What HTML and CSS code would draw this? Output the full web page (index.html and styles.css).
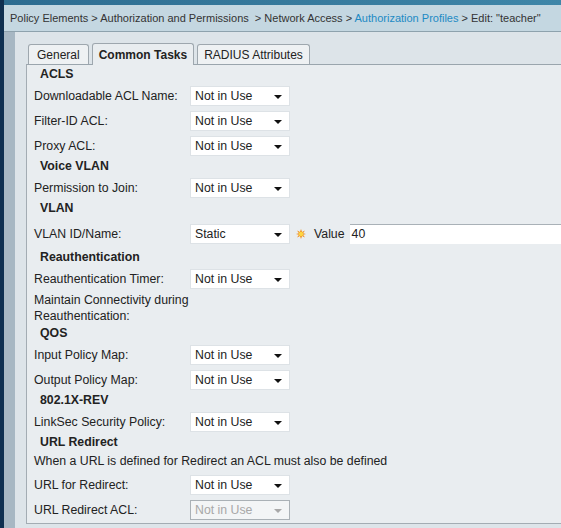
FILE: index.html
```html
<!DOCTYPE html>
<html>
<head>
<meta charset="utf-8">
<link rel="stylesheet" href="styles.css">
</head>
<body>
<div class="app">
  <div class="nav-strip"></div>
  <div class="main">
    <div class="topband"></div>
    <div class="crumbs">Policy Elements &gt; Authorization and Permissions &nbsp;&gt; Network Access &gt; <span class="link">Authorization Profiles</span> &gt; Edit: "teacher"</div>
    <div class="body">
      <div class="side"></div>
      <div class="outer">
        <div class="tabs">
          <div class="tab tab-wide">General</div>
          <div class="tab active">Common Tasks</div>
          <div class="tab">RADIUS Attributes</div>
        </div>
        <div class="panel">
          <div class="sec">ACLS</div>
          <div class="row"><span class="lbl">Downloadable ACL Name:</span><div class="sel">Not in Use<i class="arr"></i></div></div>
          <div class="row"><span class="lbl">Filter-ID ACL:</span><div class="sel">Not in Use<i class="arr"></i></div></div>
          <div class="row"><span class="lbl">Proxy ACL:</span><div class="sel">Not in Use<i class="arr"></i></div></div>
          <div class="sec">Voice VLAN</div>
          <div class="row"><span class="lbl">Permission to Join:</span><div class="sel">Not in Use<i class="arr"></i></div></div>
          <div class="sec">VLAN</div>
          <div class="row row-vlan"><span class="lbl">VLAN ID/Name:</span><div class="sel">Static<i class="arr"></i></div>
            <svg class="req" width="10" height="10" viewBox="0 0 10 10"><polygon points="5,0 6,3 9,1.5 7,4.2 10,5 7,5.8 9,8.5 6,7 5,10 4,7 1,8.5 3,5.8 0,5 3,4.2 1,1.5 4,3" fill="#f08a10"/><circle cx="5" cy="5" r="2.2" fill="#ffd640"/></svg>
            <span class="vlabel">Value</span><div class="vinput">40</div></div>
          <div class="sec">Reauthentication</div>
          <div class="row"><span class="lbl">Reauthentication Timer:</span><div class="sel">Not in Use<i class="arr"></i></div></div>
          <div class="note">Maintain Connectivity during<br>Reauthentication:</div>
          <div class="sec">QOS</div>
          <div class="row"><span class="lbl">Input Policy Map:</span><div class="sel">Not in Use<i class="arr"></i></div></div>
          <div class="row"><span class="lbl">Output Policy Map:</span><div class="sel">Not in Use<i class="arr"></i></div></div>
          <div class="sec">802.1X-REV</div>
          <div class="row"><span class="lbl">LinkSec Security Policy:</span><div class="sel">Not in Use<i class="arr"></i></div></div>
          <div class="sec">URL Redirect</div>
          <div class="info">When a URL is defined for Redirect an ACL must also be defined</div>
          <div class="row"><span class="lbl">URL for Redirect:</span><div class="sel">Not in Use<i class="arr"></i></div></div>
          <div class="row"><span class="lbl">URL Redirect ACL:</span><div class="sel disabled">Not in Use<i class="arr"></i></div></div>
        </div>
      </div>
    </div>
  </div>
</div>
</body>
</html>
```
FILE: styles.css
```css
html, body {
  margin: 0;
  padding: 0;
  width: 561px;
  height: 528px;
  overflow: hidden;
  background: #dfe6ea;
  font-family: "Liberation Sans", Arial, sans-serif;
  font-size: 12.3px;
  color: #222;
}
.app {
  display: flex;
  height: 528px;
}
.nav-strip {
  width: 4px;
  flex: none;
  background: #0e2f50;
}
.main {
  flex: 1;
  display: flex;
  flex-direction: column;
  min-width: 0;
}
.topband {
  height: 5px;
  background: linear-gradient(to right, #2d6c90, #3f86a8);
}
.crumbs {
  height: 26px;
  line-height: 26px;
  padding-left: 6px;
  background: #c4d7e1;
  border-bottom: 1px solid #8ea2ad;
  font-size: 11px;
  color: #333;
  white-space: nowrap;
  overflow: hidden;
}
.crumbs .link {
  color: #1d8ac4;
}
.body {
  flex: 1;
  display: flex;
  min-height: 0;
}
.side {
  width: 11px;
  flex: none;
  background: #a7b7c3;
}
.outer {
  flex: 1;
  padding: 12px 0 0 11px;
  background: #dde4e9;
  min-width: 0;
}
.tabs {
  display: flex;
  align-items: flex-end;
  gap: 3px;
  padding-left: 2px;
  height: 20px;
  position: relative;
  z-index: 1;
}
.tab {
  height: 19px;
  line-height: 20px;
  padding: 0 6px;
  border: 1px solid #9ea7ae;
  border-bottom: none;
  border-radius: 3px 3px 0 0;
  background: #eef1f3;
  color: #222;
  white-space: nowrap;
  font-size: 12px;
}
.tab-wide {
  padding: 0 8px;
}
.tab.active {
  height: 21px;
  line-height: 22px;
  font-weight: bold;
  background: #e9edf0;
  margin-bottom: -1px;
}
.panel {
  background: #e9edf0;
  border-top: 1px solid #9aa5ad;
  border-left: 1px solid #a3acb3;
  border-bottom: 1px solid #a3acb3;
  padding: 1px 0 1px 7px;
}
.sec {
  height: 17px;
  line-height: 17px;
  padding-left: 6px;
  font-weight: bold;
}
.row {
  height: 25px;
  display: flex;
  align-items: center;
}
.lbl {
  width: 156px;
  flex: none;
}
.sel {
  position: relative;
  box-sizing: border-box;
  width: 100px;
  height: 20px;
  line-height: 18px;
  padding-left: 4px;
  background: #fff;
  border: 1px solid #dde2e6;
  flex: none;
}
.arr {
  position: absolute;
  right: 7px;
  top: 8px;
  width: 0;
  height: 0;
  border-left: 4px solid transparent;
  border-right: 4px solid transparent;
  border-top: 4px solid #111;
}
.sel.disabled {
  border-color: #aab1b6;
  color: #a8a8a8;
  background: #f3f5f6;
}
.sel.disabled .arr {
  border-top-color: #a8a8a8;
}
.row-vlan {
  height: 32px;
  padding-top: 1px;
  box-sizing: border-box;
}
.req {
  margin-left: 6px;
  flex: none;
}
.vlabel {
  margin-left: 8px;
}
.vinput {
  margin-left: 5px;
  flex: 1;
  min-width: 0;
  height: 20px;
  line-height: 19px;
  padding-left: 2px;
  box-sizing: border-box;
  background: #fff;
  border-top: 1px solid #a9b1b7;
}
.note {
  line-height: 16px;
  padding: 1px 0 1px;
}
.info {
  height: 20px;
  line-height: 20px;
  margin-bottom: 1px;
}
```
